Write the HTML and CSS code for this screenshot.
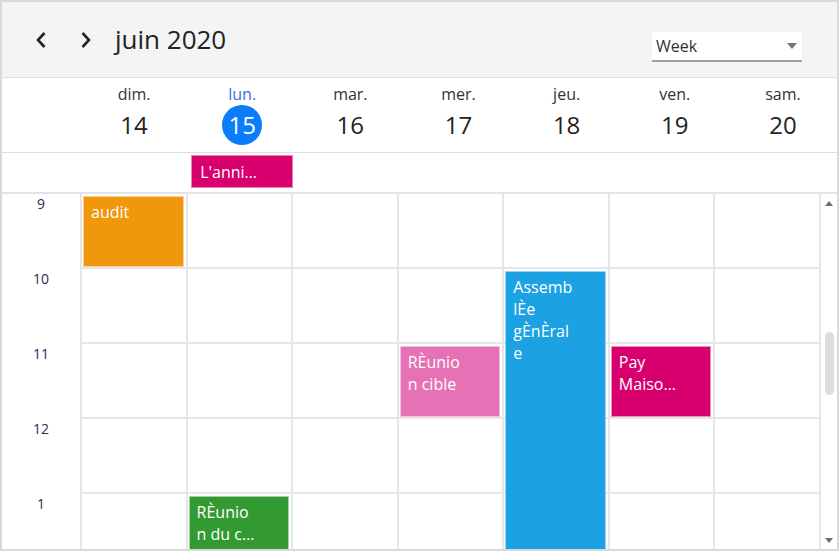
FILE: index.html
```html
<!DOCTYPE html>
<html lang="fr">
<head>
<meta charset="utf-8">
<title>Planning</title>
<link rel="stylesheet" href="styles.css">
</head>
<body>
<div class="scheduler">
  <div class="toolbar">
    <div class="nav">
      <button class="nav-btn" aria-label="précédent">
        <svg width="12" height="18" viewBox="0 0 12 18"><polyline points="9.5,2 3,9 9.5,16" fill="none" stroke="#222" stroke-width="2.6"/></svg>
      </button>
      <button class="nav-btn" aria-label="suivant">
        <svg width="12" height="18" viewBox="0 0 12 18"><polyline points="2.5,2 9,9 2.5,16" fill="none" stroke="#222" stroke-width="2.6"/></svg>
      </button>
      <h1 class="title">juin 2020</h1>
    </div>
    <div class="view-select">
      <span>Week</span>
      <svg width="10" height="6" viewBox="0 0 10 6"><polygon points="0,0 10,0 5,6" fill="#777"/></svg>
    </div>
  </div>

  <div class="day-header">
    <div class="corner"></div>
    <div class="day"><div class="dname">dim.</div><div class="dnum">14</div></div>
    <div class="day today"><div class="dname">lun.</div><div class="dnum">15</div></div>
    <div class="day"><div class="dname">mar.</div><div class="dnum">16</div></div>
    <div class="day"><div class="dname">mer.</div><div class="dnum">17</div></div>
    <div class="day"><div class="dname">jeu.</div><div class="dnum">18</div></div>
    <div class="day"><div class="dname">ven.</div><div class="dnum">19</div></div>
    <div class="day"><div class="dname">sam.</div><div class="dnum">20</div></div>
  </div>

  <div class="allday">
    <div class="corner"></div>
    <div class="allday-cell"></div>
    <div class="allday-cell"><div class="allday-event magenta">L'anni…</div></div>
    <div class="allday-cell"></div>
    <div class="allday-cell"></div>
    <div class="allday-cell"></div>
    <div class="allday-cell"></div>
    <div class="allday-cell"></div>
  </div>

  <div class="body">
    <div class="grid">
      <div class="times">
        <div class="time">9</div>
        <div class="time">10</div>
        <div class="time">11</div>
        <div class="time">12</div>
        <div class="time">1</div>
      </div>
      <div class="col">
        <div class="slot"></div><div class="slot"></div><div class="slot"></div><div class="slot"></div><div class="slot"></div>
        <div class="event orange" style="top:2px;height:71px">audit</div>
      </div>
      <div class="col">
        <div class="slot"></div><div class="slot"></div><div class="slot"></div><div class="slot"></div><div class="slot"></div>
        <div class="event green" style="top:302px;height:71px">RÈunio<br>n du c…</div>
      </div>
      <div class="col">
        <div class="slot"></div><div class="slot"></div><div class="slot"></div><div class="slot"></div><div class="slot"></div>
      </div>
      <div class="col">
        <div class="slot"></div><div class="slot"></div><div class="slot"></div><div class="slot"></div><div class="slot"></div>
        <div class="event pink" style="top:152px;height:71px">RÈunio<br>n cible</div>
      </div>
      <div class="col">
        <div class="slot"></div><div class="slot"></div><div class="slot"></div><div class="slot"></div><div class="slot"></div>
        <div class="event blue" style="top:77px;height:296px">Assemb<br>lÈe<br>gÈnÈral<br>e</div>
      </div>
      <div class="col">
        <div class="slot"></div><div class="slot"></div><div class="slot"></div><div class="slot"></div><div class="slot"></div>
        <div class="event magenta" style="top:152px;height:71px">Pay<br>Maiso…</div>
      </div>
      <div class="col">
        <div class="slot"></div><div class="slot"></div><div class="slot"></div><div class="slot"></div><div class="slot"></div>
      </div>
    </div>
    <div class="scrollbar">
      <svg class="arrow-up" width="8" height="5" viewBox="0 0 8 5"><polygon points="0,5 8,5 4,0" fill="#6f6f6f"/></svg>
      <div class="thumb"></div>
      <svg class="arrow-down" width="8" height="5" viewBox="0 0 8 5"><polygon points="0,0 8,0 4,5" fill="#6f6f6f"/></svg>
    </div>
  </div>
</div>
</body>
</html>
```

FILE: styles.css
```css
* { box-sizing: border-box; }
html, body { margin: 0; background: #fff; }
body { font-family: "Open Sans", "Noto Sans", sans-serif; }

.scheduler {
  width: 839px;
  height: 551px;
  border: 2px solid #d9d9d9;
  display: flex;
  flex-direction: column;
  overflow: hidden;
}

/* toolbar */
.toolbar {
  height: 76px;
  flex: none;
  background: #f4f4f4;
  border-bottom: 1px solid #dedede;
  display: flex;
  align-items: flex-start;
  padding: 0 35px 0 24px;
}
.nav {
  height: 75px;
  display: flex;
  align-items: center;
}
.nav-btn {
  width: 30px;
  height: 30px;
  border: 0;
  padding: 0;
  background: none;
  display: flex;
  align-items: center;
  justify-content: center;
}
.nav-btn + .nav-btn { margin-left: 15px; }
.title {
  margin: -2px 0 0 14px;
  font-size: 26px;
  font-weight: 400;
  line-height: 36px;
  color: #222;
}
.view-select {
  margin: 30px 0 0 auto;
  width: 150px;
  height: 30px;
  background: #fff;
  border-bottom: 2px solid #a0a0a0;
  display: flex;
  align-items: center;
  justify-content: space-between;
  padding: 0 5px 0 4px;
  font-size: 16px;
  color: #333;
}

/* day header */
.day-header {
  height: 75px;
  flex: none;
  border-bottom: 1px solid #dedede;
  display: grid;
  grid-template-columns: 78px repeat(7, 1fr);
}
.day {
  display: flex;
  flex-direction: column;
  align-items: center;
  padding-top: 6px;
}
.dname {
  font-size: 16px;
  line-height: 20px;
  color: #333;
}
.dnum {
  margin-top: 1px;
  width: 40px;
  height: 40px;
  border-radius: 50%;
  font-size: 24px;
  line-height: 40px;
  text-align: center;
  color: #222;
}
.today .dname { color: #3d6ee6; }
.today .dnum { background: #0a7dfa; color: #fff; }

/* all-day row */
.allday {
  height: 41px;
  flex: none;
  border-bottom: 2px solid #e2e2e2;
  display: grid;
  grid-template-columns: 78px repeat(7, 1fr);
}
.allday-cell { padding: 2px 3px; }
.allday-event {
  height: 33px;
  color: #fff;
  font-size: 16px;
  display: flex;
  align-items: center;
  padding-left: 8px;
  border: 1px solid rgba(255, 255, 255, 0.5);
}

/* time grid */
.body {
  flex: 1;
  min-height: 0;
  display: flex;
  overflow: hidden;
}
.grid {
  flex: 1;
  display: grid;
  grid-template-columns: 78px repeat(7, 1fr);
  align-items: start;
}
.time {
  height: 75px;
  font-size: 14px;
  line-height: 19px;
  text-align: center;
  color: #2b2b55;
}
.col {
  position: relative;
  border-left: 2px solid #e6e6e6;
}
.slot {
  height: 75px;
  border-bottom: 2px solid #e6e6e6;
}
.event {
  position: absolute;
  left: 1px;
  right: 2px;
  color: #fff;
  font-size: 16px;
  line-height: 22px;
  padding: 4px 7px;
  border: 1px solid rgba(255, 255, 255, 0.55);
}

.orange { background: #f0970c; }
.green { background: #339933; }
.pink { background: #e572b5; }
.blue { background: #1ca1e2; }
.magenta { background: #d8006e; }

/* scrollbar */
.scrollbar {
  width: 18px;
  flex: none;
  border-left: 2px solid #e6e6e6;
  display: flex;
  flex-direction: column;
  align-items: center;
}
.arrow-up { margin-top: 7px; flex: none; }
.thumb {
  margin-top: 126px;
  width: 9px;
  height: 63px;
  border-radius: 5px;
  background: #dcdcdc;
  flex: none;
}
.arrow-down { margin-top: auto; margin-bottom: 6px; flex: none; }
```
